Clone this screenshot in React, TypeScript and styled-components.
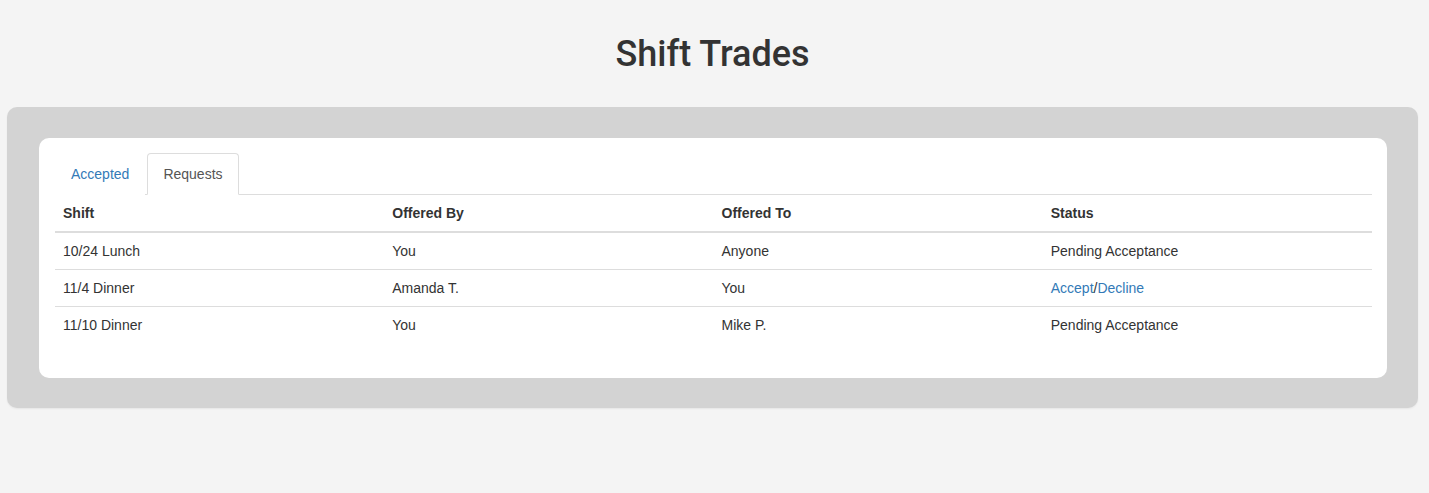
import React, { useState } from 'react';
import styled, { createGlobalStyle } from 'styled-components';

const GlobalStyle = createGlobalStyle`
  html, body {
    margin: 0;
    padding: 0;
    background: #f4f4f4;
  }
  body {
    font-family: "Liberation Sans", Arial, Helvetica, sans-serif;
    font-size: 14px;
    line-height: 20px;
    color: #333;
  }
  * {
    box-sizing: border-box;
  }
`;

const Page = styled.div`
  padding: 35px 11px 60px 7px;
`;

const Title = styled.h1`
  margin: 0 0 32px;
  font-family: Roboto, "Liberation Sans", Arial, sans-serif;
  font-size: 36px;
  line-height: 1.1;
  font-weight: 500;
  text-align: center;
  color: #333;
`;

const Panel = styled.div`
  background: #d3d3d3;
  border-radius: 10px;
  padding: 31px 31px 30px 32px;
  box-shadow: 0 1px 2px rgba(0, 0, 0, 0.06);
`;

const Card = styled.div`
  background: #fff;
  border-radius: 10px;
  padding: 15px 15px 15px 16px;
`;

const Tabs = styled.ul`
  display: flex;
  list-style: none;
  margin: 0;
  padding: 0;
  border-bottom: 1px solid #ddd;
`;

const Tab = styled.li<{ $active?: boolean }>`
  margin-right: 2px;
  margin-bottom: -1px;
  padding: 10px 15px;
  line-height: 20px;
  border: 1px solid ${({ $active }) => ($active ? '#ddd' : 'transparent')};
  border-bottom-color: ${({ $active }) => ($active ? '#fff' : 'transparent')};
  border-radius: 4px 4px 0 0;
  background: #fff;
  color: ${({ $active }) => ($active ? '#555' : '#337ab7')};
  cursor: ${({ $active }) => ($active ? 'default' : 'pointer')};
`;

const Table = styled.table`
  width: 100%;
  border-collapse: collapse;
  table-layout: fixed;
  margin-bottom: 20px;
`;

const Th = styled.th`
  text-align: left;
  font-weight: bold;
  padding: 8px;
  line-height: 20px;
  border-bottom: 2px solid #ddd;
`;

const Td = styled.td`
  padding: 8px;
  line-height: 20px;
  border-top: 1px solid #ddd;
`;

const Link = styled.a`
  color: #337ab7;
  text-decoration: none;
  cursor: pointer;
`;

type Trade = {
  shift: string;
  by: string;
  to: string;
  status: 'pending' | 'respond';
};

const trades: Trade[] = [
  { shift: '10/24 Lunch', by: 'You', to: 'Anyone', status: 'pending' },
  { shift: '11/4 Dinner', by: 'Amanda T.', to: 'You', status: 'respond' },
  { shift: '11/10 Dinner', by: 'You', to: 'Mike P.', status: 'pending' },
];

const App: React.FC = () => {
  const [tab, setTab] = useState<'accepted' | 'requests'>('requests');

  return (
    <>
      <GlobalStyle />
      <Page>
        <Title>Shift Trades</Title>
        <Panel>
          <Card>
            <Tabs>
              <Tab $active={tab === 'accepted'} onClick={() => setTab('accepted')}>
                Accepted
              </Tab>
              <Tab $active={tab === 'requests'} onClick={() => setTab('requests')}>
                Requests
              </Tab>
            </Tabs>
            <Table>
              <thead>
                <tr>
                  <Th>Shift</Th>
                  <Th>Offered By</Th>
                  <Th>Offered To</Th>
                  <Th>Status</Th>
                </tr>
              </thead>
              <tbody>
                {trades.map((t) => (
                  <tr key={t.shift}>
                    <Td>{t.shift}</Td>
                    <Td>{t.by}</Td>
                    <Td>{t.to}</Td>
                    <Td>
                      {t.status === 'pending' ? (
                        'Pending Acceptance'
                      ) : (
                        <>
                          <Link>Accept</Link>/<Link>Decline</Link>
                        </>
                      )}
                    </Td>
                  </tr>
                ))}
              </tbody>
            </Table>
          </Card>
        </Panel>
      </Page>
    </>
  );
};

export default App;
